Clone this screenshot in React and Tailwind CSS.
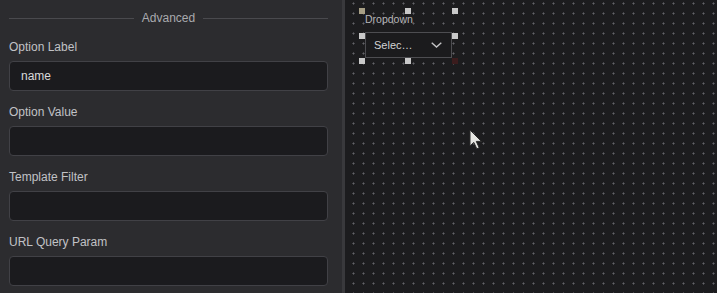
import React from "react";

const FIELDS = [
  { label: "Option Label", value: "name" },
  { label: "Option Value", value: "" },
  { label: "Template Filter", value: "" },
  { label: "URL Query Param", value: "" },
];

// handle centres inside the selection box (93 x 50)
const HANDLES = [
  { pos: "left-[-3px] top-[-3px]", color: "bg-[#a79f85]" },
  { pos: "left-[43px] top-[-3px]", color: "bg-[#c9c9c9]" },
  { pos: "left-[90px] top-[-3px]", color: "bg-[#c9c9c9]" },
  { pos: "left-[-3px] top-[22px]", color: "bg-[#c9c9c9]" },
  { pos: "left-[90px] top-[22px]", color: "bg-[#c9c9c9]" },
  { pos: "left-[-3px] top-[47px]", color: "bg-[#c9c9c9]" },
  { pos: "left-[43px] top-[47px]", color: "bg-[#c9c9c9]" },
  { pos: "left-[90px] top-[47px]", color: "bg-[#3b1c1d]" },
];

const Field = ({ label, value }) => (
  <div className="flex flex-col">
    <div className="text-[12px] leading-5 pt-px text-[#c1c2c6] mb-[4px]">{label}</div>
    <input
      readOnly
      value={value}
      className="h-[30px] w-full rounded-[4px] border border-[#414146] bg-[#1b1b1e] px-[11px] text-[12px] text-[#d9d9d9] outline-none"
    />
  </div>
);

const DotGrid = () => (
  <svg className="absolute inset-0 w-full h-full" shapeRendering="crispEdges">
    <defs>
      <pattern id="dots" width="10" height="10" patternUnits="userSpaceOnUse">
        <rect x="7" y="3" width="3" height="1" fill="#444448" />
        <rect x="8" y="2" width="1" height="3" fill="#444448" />
        <rect x="8" y="3" width="1" height="1" fill="#646468" />
      </pattern>
    </defs>
    <rect width="100%" height="100%" fill="url(#dots)" />
  </svg>
);

export default function App() {
  return (
    <div className="flex h-screen w-full overflow-hidden bg-[#1c1c1e] font-['Liberation_Sans',Arial,sans-serif]">
      {/* Properties panel */}
      <div className="w-[345px] shrink-0 border-r-[3px] border-[#39393c] bg-[#2c2c2f] pl-[9px] pr-[14px] pt-2">
        <div className="flex h-5 items-center gap-2">
          <div className="h-px flex-1 bg-[#4a4a4e]" />
          <span className="text-[12px] text-[#a9aaae]">Advanced</span>
          <div className="h-px flex-1 bg-[#4a4a4e]" />
        </div>
        <div className="mt-2 flex flex-col gap-[10px]">
          {FIELDS.map((f) => (
            <Field key={f.label} {...f} />
          ))}
        </div>
      </div>

      {/* Canvas */}
      <div className="relative flex-1 overflow-hidden bg-[#1c1c1e]">
        <DotGrid />

        {/* Selected dropdown widget */}
        <div className="absolute left-[17px] top-[11px] h-[50px] w-[93px]">
          <div className="absolute left-[3px] top-[2px] text-[10.5px] leading-[12px] text-[#b6b6b8]">
            Dropdown
          </div>
          <div className="absolute left-[3px] top-[21px] flex h-[26px] w-[87px] items-center justify-between border border-[#4d4d51] bg-[#1b1b1d] pl-2 pr-[9px]">
            <span className="text-[11px] text-[#d2d2d4]">Selec…</span>
            <svg width="11" height="6" viewBox="0 0 11 6" fill="none">
              <path d="M0.7 0.7 L5.5 5 L10.3 0.7" stroke="#c4c4c6" strokeWidth="1.4" />
            </svg>
          </div>
          {HANDLES.map((h, i) => (
            <div key={i} className={`absolute h-[6px] w-[6px] ${h.pos} ${h.color}`} />
          ))}
        </div>

        {/* Mouse cursor */}
        <svg className="absolute left-[124px] top-[129px]" width="15" height="22" viewBox="0 0 15 22">
          <path
            d="M1 1 L1 17 L4.8 13.4 L7.8 19.8 L10.2 18.7 L7.3 12.4 L12.4 12.4 Z"
            fill="#e6e6e2"
            stroke="#2a2a2a"
            strokeWidth="1"
            strokeLinejoin="round"
          />
        </svg>
      </div>
    </div>
  );
}
